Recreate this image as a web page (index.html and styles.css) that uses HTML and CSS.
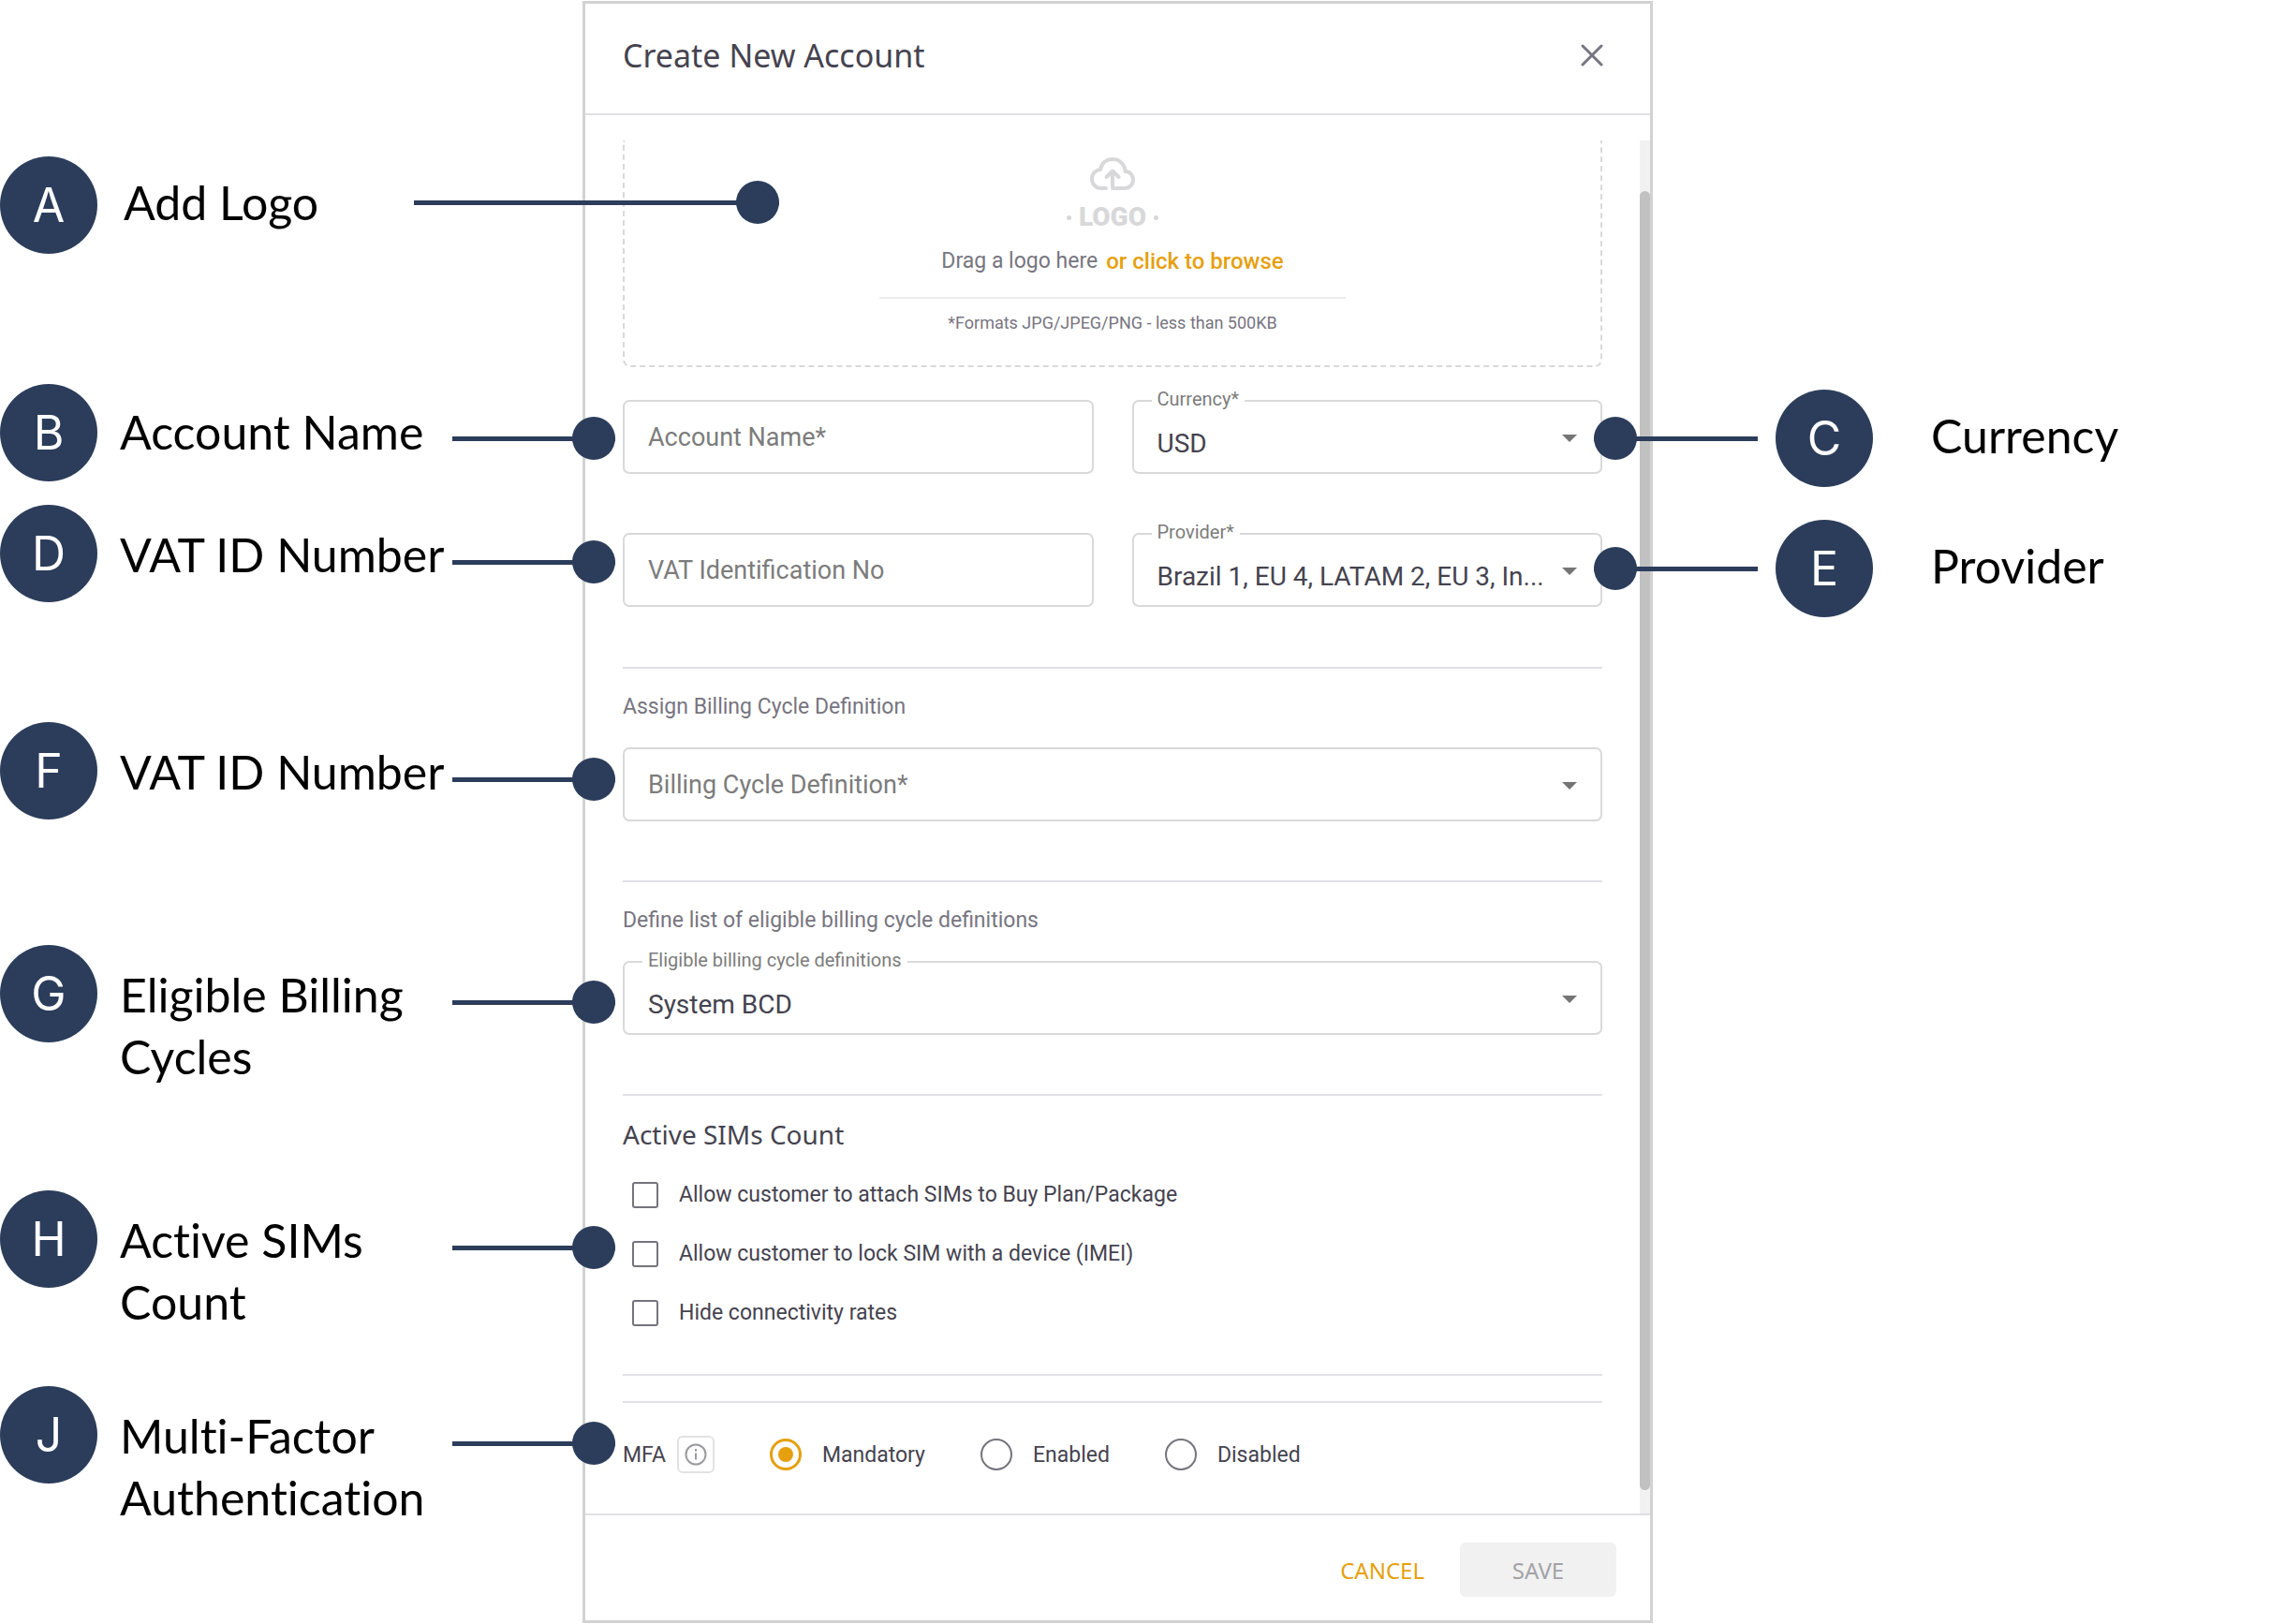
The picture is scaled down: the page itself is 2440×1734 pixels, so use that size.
FILE: index.html
```html
<!DOCTYPE html>
<html lang="en">

<head>
    <meta charset="UTF-8">
    <meta name="viewport" content="width=device-width, initial-scale=1.0">
    <title>Create New Account</title>

    <link rel="stylesheet" href="styles.css">
</head>

<body>
    <main class="figure">
        <!-- left callouts -->
        <aside class="notes">
            <div class="callout callout-a">
                <span class="badge">A</span>
                <p class="note">Add Logo</p>
                <span class="connector"></span>
            </div>
            <div class="callout callout-b">
                <span class="badge">B</span>
                <p class="note">Account Name</p>
                <span class="connector"></span>
            </div>
            <div class="callout callout-d">
                <span class="badge">D</span>
                <p class="note">VAT ID Number</p>
                <span class="connector"></span>
            </div>
            <div class="callout callout-f">
                <span class="badge">F</span>
                <p class="note">VAT ID Number</p>
                <span class="connector"></span>
            </div>
            <div class="callout callout-g">
                <span class="badge">G</span>
                <p class="note">Eligible Billing Cycles</p>
                <span class="connector"></span>
            </div>
            <div class="callout callout-h">
                <span class="badge">H</span>
                <p class="note">Active SIMs Count</p>
                <span class="connector"></span>
            </div>
            <div class="callout callout-j">
                <span class="badge">J</span>
                <p class="note">Multi-Factor Authentication</p>
                <span class="connector"></span>
            </div>
        </aside>

        <form class="dialog">
            <header class="dialog-header">
                <h1>Create New Account</h1>
                <button type="button" class="close" aria-label="Close">
                    <svg width="24" height="24" viewBox="0 0 24 24" fill="none" stroke="#77757f" stroke-width="3" stroke-linecap="round">
                        <path d="M2 2l20 20M22 2L2 22" />
                    </svg>
                </button>
            </header>

            <div class="dialog-body">
                <div class="content">
                    <div class="upload">
                        <svg class="cloud" width="48" height="36" viewBox="0 0 48 36" fill="none" stroke="#d8d8da" stroke-width="4" stroke-linecap="round" stroke-linejoin="round">
                            <path d="M17 33h-5C6 33 2 28.500 2 23c0-5.500 4-9.500 9-10C12.500 6 17.500 2 24 2c7.500 0 13 5.500 13.500 13C42.500 15 46 19 46 24c0 5-4 9-9 9H24V15" />
                            <path d="M17.500 21L24 14.500l6.500 6.500" />
                        </svg>
                        <div class="logo-word"><i></i><span>LOGO</span><i></i></div>
                        <div class="drag">
                            <span>Drag a logo here</span>
                            <a href="#">or click to browse</a>
                        </div>
                        <p class="formats">*Formats JPG/JPEG/PNG - less than 500KB</p>
                    </div>

                    <div class="grid">
                        <div class="field">
                            <input type="text" id="account-name">
                            <label for="account-name">Account Name*</label>
                        </div>
                        <div class="field filled">
                            <select id="currency">
                                <option>USD</option>
                            </select>
                            <label for="currency">Currency*</label>
                        </div>
                        <div class="field">
                            <input type="text" id="vat">
                            <label for="vat">VAT Identification No</label>
                        </div>
                        <div class="field filled">
                            <select id="provider">
                                <option>Brazil 1, EU 4, LATAM 2, EU 3, In...</option>
                            </select>
                            <label for="provider">Provider*</label>
                        </div>
                    </div>

                    <section class="section">
                        <p class="hint">Assign Billing Cycle Definition</p>
                        <div class="field">
                            <select id="bcd">
                                <option></option>
                            </select>
                            <label for="bcd">Billing Cycle Definition*</label>
                        </div>
                    </section>

                    <section class="section">
                        <p class="hint">Define list of eligible billing cycle definitions</p>
                        <div class="field filled">
                            <select id="eligible">
                                <option>System BCD</option>
                            </select>
                            <label for="eligible">Eligible billing cycle definitions</label>
                        </div>
                    </section>

                    <section class="section sims">
                        <h2>Active SIMs Count</h2>
                        <label class="check"><input type="checkbox">Allow customer to attach SIMs to Buy Plan/Package</label>
                        <label class="check"><input type="checkbox">Allow customer to lock SIM with a device (IMEI)</label>
                        <label class="check"><input type="checkbox">Hide connectivity rates</label>
                    </section>

                    <hr>

                    <div class="mfa">
                        <span>MFA</span>
                        <button type="button" class="info" aria-label="About MFA">
                            <svg width="24" height="24" viewBox="0 0 24 24" fill="none" stroke="#9a9a9e" stroke-width="2">
                                <circle cx="12" cy="12" r="10.500" />
                                <path d="M12 10.500v7M12 6v2.500" />
                            </svg>
                        </button>
                        <label class="radio"><input type="radio" name="mfa" checked>Mandatory</label>
                        <label class="radio"><input type="radio" name="mfa">Enabled</label>
                        <label class="radio"><input type="radio" name="mfa">Disabled</label>
                    </div>
                </div>
                <div class="scrollbar">
                    <div class="thumb"></div>
                </div>
            </div>

            <footer class="dialog-footer">
                <button type="button" class="cancel">CANCEL</button>
                <button type="submit" class="save" disabled>SAVE</button>
            </footer>
        </form>

        <!-- right callouts -->
        <aside class="notes notes-right">
            <div class="callout callout-c">
                <span class="connector"></span>
                <span class="badge">C</span>
                <p class="note">Currency</p>
            </div>
            <div class="callout callout-e">
                <span class="connector"></span>
                <span class="badge">E</span>
                <p class="note">Provider</p>
            </div>
        </aside>
    </main>
</body>

</html>
```

FILE: styles.css
```css
* {
    margin: 0;
    padding: 0;
    box-sizing: border-box;
}

:root {
    --navy: #2c3d5b;
    --orange: #e6a00e;
    --text: #45434f;
    --muted: #77757f;
    --line: #e0e0e6;
    --border: #d9d9d9;
}

body {
    background-color: #fff;
    color: var(--text);
    font-family: Roboto, "Liberation Sans", sans-serif;
    font-size: 23px;
}

button,
input,
select {
    font: inherit;
    color: inherit;
    background: none;
    border: none;
}

.figure {
    display: grid;
    grid-template-columns: 622px minmax(0, 1fr) 675px;
    padding-top: 1px;
}

/* callouts */
.notes {
    position: relative;
    z-index: 1;
}

.callout {
    position: absolute;
    left: 0;
    width: 657px;
    display: flex;
    align-items: flex-start;
}

.badge {
    flex: none;
    width: 104px;
    height: 104px;
    border-radius: 50%;
    background-color: var(--navy);
    color: #fff;
    font: 50px/104px Inter, "Liberation Sans", sans-serif;
    text-align: center;
}

.note {
    width: 355px;
    margin-left: 24px;
    padding-top: 20px;
    color: #000;
    font: 50px/66px Lato, "Open Sans", sans-serif;
    font-variant-ligatures: none;
}

.connector {
    position: relative;
    flex: 1;
    height: 5px;
    margin-top: 59px;
    background-color: var(--navy);
}

.connector::after {
    content: "";
    position: absolute;
    top: -21px;
    right: 0;
    width: 46px;
    height: 46px;
    border-radius: 50%;
    background-color: var(--navy);
}

.callout-a {
    top: 166px;
    width: 832px;
}

.callout-a .note {
    width: 310px;
    margin-left: 28px;
    padding-top: 16px;
}

.callout-a .connector {
    margin-top: 47px;
}

.callout-b {
    top: 409px;
}

.callout-b .note {
    padding-top: 18px;
}

.callout-b .connector {
    margin-top: 56px;
}

.callout-d {
    top: 538px;
}

.callout-f {
    top: 770px;
}

.callout-g {
    top: 1008px;
}

.callout-h {
    top: 1270px;
}

.callout-j {
    top: 1479px;
}

.notes-right .callout {
    left: -63px;
}

.notes-right .connector {
    flex: none;
    width: 175px;
    margin-right: 19px;
    margin-top: 50px;
}

.notes-right .connector::after {
    right: auto;
    left: 0;
}

.notes-right .note {
    margin-left: 62px;
    padding-top: 16px;
}

.callout-c {
    top: 415px;
}

.callout-e {
    top: 554px;
}

/* dialog */
.dialog {
    border: 3px solid #d2d2d2;
}

.dialog-header {
    display: flex;
    justify-content: space-between;
    align-items: center;
    height: 119px;
    padding: 0 50px 8px 40px;
    border-bottom: 2px solid var(--line);
}

h1 {
    font: 34px/48px "Noto Sans", "Open Sans", sans-serif;
}

.close {
    display: flex;
}

.dialog-body {
    display: flex;
    padding-top: 27px;
    border-bottom: 2px solid var(--line);
}

.content {
    flex: 1;
    padding: 0 40px 43px;
}

.scrollbar {
    width: 11px;
    padding: 54px 0 25px;
    background-color: #f1f1f1;
}

.thumb {
    height: 100%;
    border-radius: 6px;
    background-color: #c1c1c1;
}

/* logo upload */
.upload {
    display: flex;
    flex-direction: column;
    align-items: center;
    height: 242px;
    padding-top: 18px;
    border: 2px dashed var(--border);
    border-top: none;
    border-radius: 0 0 8px 8px;
    color: var(--muted);
}

.logo-word {
    display: flex;
    align-items: center;
    gap: 8px;
    margin-top: 10px;
    color: #d8d8da;
    font: 900 28px/36px Roboto, sans-serif;
}

.logo-word i {
    width: 5px;
    height: 5px;
    border-radius: 50%;
    background-color: #d8d8da;
}

.drag {
    display: flex;
    align-items: center;
    gap: 9px;
    margin-top: 13px;
    line-height: 32px;
}

.drag a {
    color: var(--orange);
    font-size: 24px;
    font-weight: 500;
    text-decoration: none;
}

.formats {
    width: 498px;
    margin-top: 22px;
    padding-top: 14px;
    border-top: 2px solid #ececee;
    font-size: 18px;
    line-height: 24px;
    text-align: center;
}

/* fields */
.grid {
    display: grid;
    grid-template-columns: 1fr 1fr;
    gap: 63px 41px;
    margin: 35px 0 64px;
}

.field {
    position: relative;
    height: 79px;
}

.field input,
.field select {
    width: 100%;
    height: 100%;
    padding: 0 27px;
    border: 2px solid var(--border);
    border-radius: 7px;
    appearance: none;
    font-size: 28px;
}

.field label {
    position: absolute;
    top: 24px;
    left: 27px;
    color: #7c7c7c;
    font-size: 27px;
    line-height: 32px;
    pointer-events: none;
}

/* drop-down arrow */
.field:has(select)::after {
    content: "";
    position: absolute;
    top: 37px;
    right: 27px;
    border: 8px solid transparent;
    border-top-color: #757575;
    border-bottom: none;
    pointer-events: none;
}

.filled select {
    padding: 14px 50px 0 25px;
}

.filled label {
    top: -13px;
    left: 21px;
    padding: 0 6px;
    background-color: #fff;
    font-size: 20px;
    line-height: 24px;
}

/* sections */
.section {
    padding: 25px 0 63px;
    border-top: 2px solid var(--line);
}

.hint {
    margin-bottom: 27px;
    color: var(--muted);
    line-height: 32px;
}

.sims {
    padding-bottom: 34px;
    border-bottom: 2px solid var(--line);
}

h2 {
    margin-bottom: 17px;
    font: 28px/32px "Noto Sans", "Open Sans", sans-serif;
}

.check {
    display: flex;
    align-items: center;
    gap: 22px;
    height: 63px;
    padding-left: 10px;
}

.check input {
    width: 28px;
    height: 28px;
    border: 2px solid #75737c;
    border-radius: 3px;
    appearance: none;
}

hr {
    margin-top: 27px;
    border: none;
    border-top: 2px solid var(--line);
}

.mfa {
    display: flex;
    align-items: center;
    padding-top: 35px;
}

.info {
    display: flex;
    align-items: center;
    justify-content: center;
    width: 40px;
    height: 40px;
    margin-left: 12px;
    border: 2px solid #e2e2e2;
    border-radius: 6px;
}

.radio {
    display: flex;
    align-items: center;
    gap: 22px;
    margin-left: 59px;
}

.radio input {
    width: 34px;
    height: 34px;
    border: 2px solid #75737c;
    border-radius: 50%;
    appearance: none;
}

.radio input:checked {
    padding: 6px;
    border: 3px solid var(--orange);
    background: var(--orange) content-box;
}

/* footer */
.dialog-footer {
    display: flex;
    justify-content: flex-end;
    align-items: center;
    gap: 38px;
    height: 112px;
    padding: 4px 36px 0;
    font: 24px "Noto Sans", "Open Sans", sans-serif;
}

.cancel {
    color: var(--orange);
}

.save {
    width: 167px;
    height: 58px;
    border-radius: 6px;
    background-color: #f1f1f1;
    color: #a3a3a6;
}
```
